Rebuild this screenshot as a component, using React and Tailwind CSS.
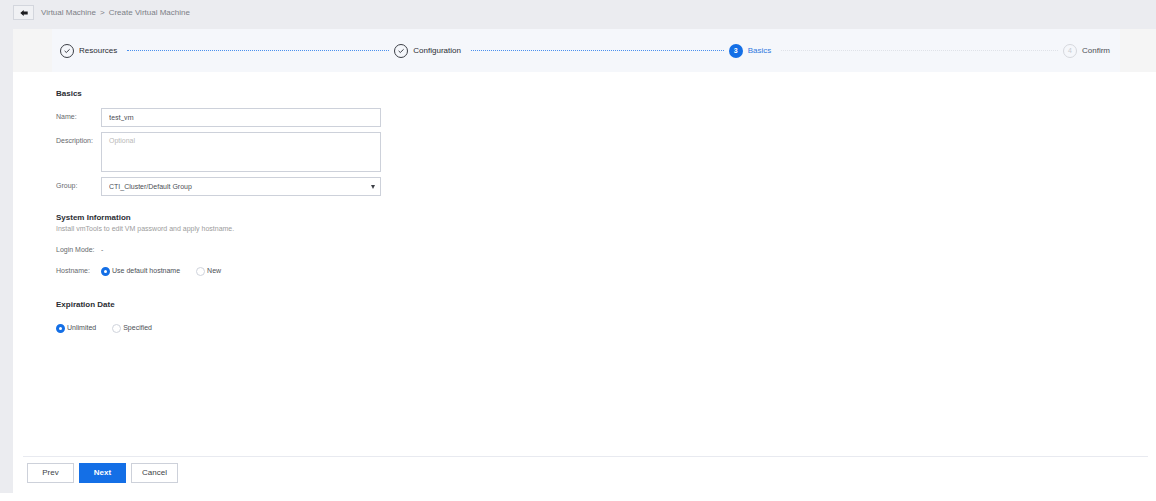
import { useState } from 'react';

const steps = [
  { label: 'Resources', status: 'done' },
  { label: 'Configuration', status: 'done' },
  { label: 'Basics', status: 'active' },
  { label: 'Confirm', status: 'pending' },
];

const circleStyles = {
  done: 'border border-[#3c3f46] text-[#3c3f46]',
  active: 'bg-[#146fe6] text-white font-bold',
  pending: 'border border-[#d6d8dd] text-[#c9ccd2]',
};

const labelStyles = {
  done: 'text-[#2b2d33]',
  active: 'text-[#2f77de]',
  pending: 'text-[#4c4f56]',
};

const StepCircle = ({ status, number }) => (
  <span
    className={`w-[14px] h-[14px] shrink-0 rounded-full flex items-center justify-center text-[7px] leading-none ${circleStyles[status]}`}
  >
    {status === 'done' ? (
      <svg viewBox="0 0 12 12" className="w-3 h-3" fill="none" stroke="currentColor">
        <path d="M3.6 5.9 5.3 7.5 8.6 4.3" />
      </svg>
    ) : (
      number
    )}
  </span>
);

const Stepper = () => (
  <div className="bg-[#f5f5f5] pl-[39px] pr-9">
    <ol className="flex items-center h-[43px] bg-[#f5f7fb] pl-2 pr-[10px]">
      {steps.map((step, index) => {
        const last = index === steps.length - 1;
        return (
          <li key={step.label} className={`flex items-center ${last ? '' : 'flex-1 pr-[5px]'}`}>
            <StepCircle status={step.status} number={index + 1} />
            <span className={`ml-[5px] text-[8px] leading-3 ${labelStyles[step.status]}`}>
              {step.label}
            </span>
            {!last && (
              <span
                className={`flex-1 ml-[10px] border-t border-dotted ${
                  step.status === 'done' ? 'border-[#4a90ee]' : 'border-[#dfe2e8]'
                }`}
              />
            )}
          </li>
        );
      })}
    </ol>
  </div>
);

const Radio = ({ name, label, checked, onChange }) => (
  <label className="flex items-center gap-[2px] cursor-pointer text-[#4c4f56]">
    <input
      type="radio"
      name={name}
      checked={checked}
      onChange={onChange}
      className="appearance-none w-[9px] h-[9px] rounded-full border border-[#cfd3dc] bg-white checked:border-[3px] checked:border-[#146fe6]"
    />
    {label}
  </label>
);

const fieldStyles =
  'w-full block bg-white border border-[#cdd1da] px-[7px] text-[#4c4f56] placeholder:text-[#b9b9b9] outline-none focus:border-[#146fe6]';

const App = () => {
  const [name, setName] = useState('test_vm');
  const [description, setDescription] = useState('');
  const [hostname, setHostname] = useState('default');
  const [expiration, setExpiration] = useState('unlimited');

  return (
    <div className="min-h-screen flex flex-col bg-white pb-2 font-['Liberation_Sans',Arial,sans-serif] text-[7px] leading-[10px] text-[#66686d]">
      <div className="flex-1 flex flex-col bg-[#ebecf0] pl-[13px]">
        <header className="flex items-center h-[29px] pb-1">
          <button
            type="button"
            aria-label="Back"
            className="w-[21px] h-[15px] flex items-center justify-center border border-[#d3d6dd] bg-[#f0f1f4] text-[#1c1d20]"
          >
            <svg viewBox="0 0 8 6" className="w-2 h-[6px]" fill="currentColor">
              <path d="M0.3 3 3.7 0V1.6H7.7V4.4H3.7V6Z" />
            </svg>
          </button>
          <nav className="flex items-center gap-1 ml-[7px] text-[8px] text-[#7c7f86]">
            <a href="#vm">Virtual Machine</a>
            <span>&gt;</span>
            <span>Create Virtual Machine</span>
          </nav>
        </header>

        <main className="flex-1 flex flex-col bg-white">
          <Stepper />

          <form className="flex-1 px-[43px] pt-4">
            <section>
              <h2 className="text-[8px] leading-3 font-bold text-[#2b2d33]">Basics</h2>
              <div className="grid grid-cols-[45px_280px] gap-y-[5px] mt-2">
                <label htmlFor="name" className="pt-1">Name:</label>
                <input
                  id="name"
                  type="text"
                  value={name}
                  onChange={(e) => setName(e.target.value)}
                  className={`${fieldStyles} h-[19px] font-[Roboto,sans-serif]`}
                />
                <label htmlFor="description" className="pt-1">Description:</label>
                <textarea
                  id="description"
                  placeholder="Optional"
                  value={description}
                  onChange={(e) => setDescription(e.target.value)}
                  className={`${fieldStyles} h-10 pt-[3px] resize-none`}
                />
                <label htmlFor="group" className="pt-1">Group:</label>
                <div className="relative">
                  <select id="group" className={`${fieldStyles} h-[19px] appearance-none`}>
                    <option>CTI_Cluster/Default Group</option>
                  </select>
                  <svg
                    viewBox="0 0 4 4"
                    className="absolute right-[6px] top-2 w-1 h-1 pointer-events-none text-[#3c3f46]"
                    fill="currentColor"
                  >
                    <path d="M0 0H4L2 4Z" />
                  </svg>
                </div>
              </div>
            </section>

            <section className="mt-4">
              <h2 className="text-[8px] leading-3 font-bold text-[#2b2d33]">System Information</h2>
              <p className="text-[#9c9c9c]">Install vmTools to edit VM password and apply hostname.</p>
              <div className="flex mt-[11px]">
                <span className="w-[45px]">Login Mode:</span>
                <span>-</span>
              </div>
              <div className="flex mt-[11px]" role="radiogroup" aria-labelledby="hostname-label">
                <span id="hostname-label" className="w-[45px]">Hostname:</span>
                <div className="flex gap-4">
                  <Radio
                    name="hostname"
                    label="Use default hostname"
                    checked={hostname === 'default'}
                    onChange={() => setHostname('default')}
                  />
                  <Radio
                    name="hostname"
                    label="New"
                    checked={hostname === 'new'}
                    onChange={() => setHostname('new')}
                  />
                </div>
              </div>
            </section>

            <section className="mt-[23px]">
              <h2 className="text-[8px] leading-3 font-bold text-[#2b2d33]">Expiration Date</h2>
              <div className="flex gap-4 mt-3">
                <Radio
                  name="expiration"
                  label="Unlimited"
                  checked={expiration === 'unlimited'}
                  onChange={() => setExpiration('unlimited')}
                />
                <Radio
                  name="expiration"
                  label="Specified"
                  checked={expiration === 'specified'}
                  onChange={() => setExpiration('specified')}
                />
              </div>
            </section>
          </form>

          <footer className="ml-[10px] mr-2 flex gap-[5px] border-t border-[#e8eaf0] pl-1 pt-[6px] pb-[10px] text-[8px] text-[#3c3f46]">
            <button type="button" className="w-[47px] h-5 border border-[#cdd1da] bg-white">Prev</button>
            <button type="button" className="w-[47px] h-5 border border-[#146fe6] bg-[#146fe6] text-white font-bold">
              Next
            </button>
            <button type="button" className="w-[47px] h-5 border border-[#cdd1da] bg-white">Cancel</button>
          </footer>
        </main>
      </div>
    </div>
  );
};

export default App;
